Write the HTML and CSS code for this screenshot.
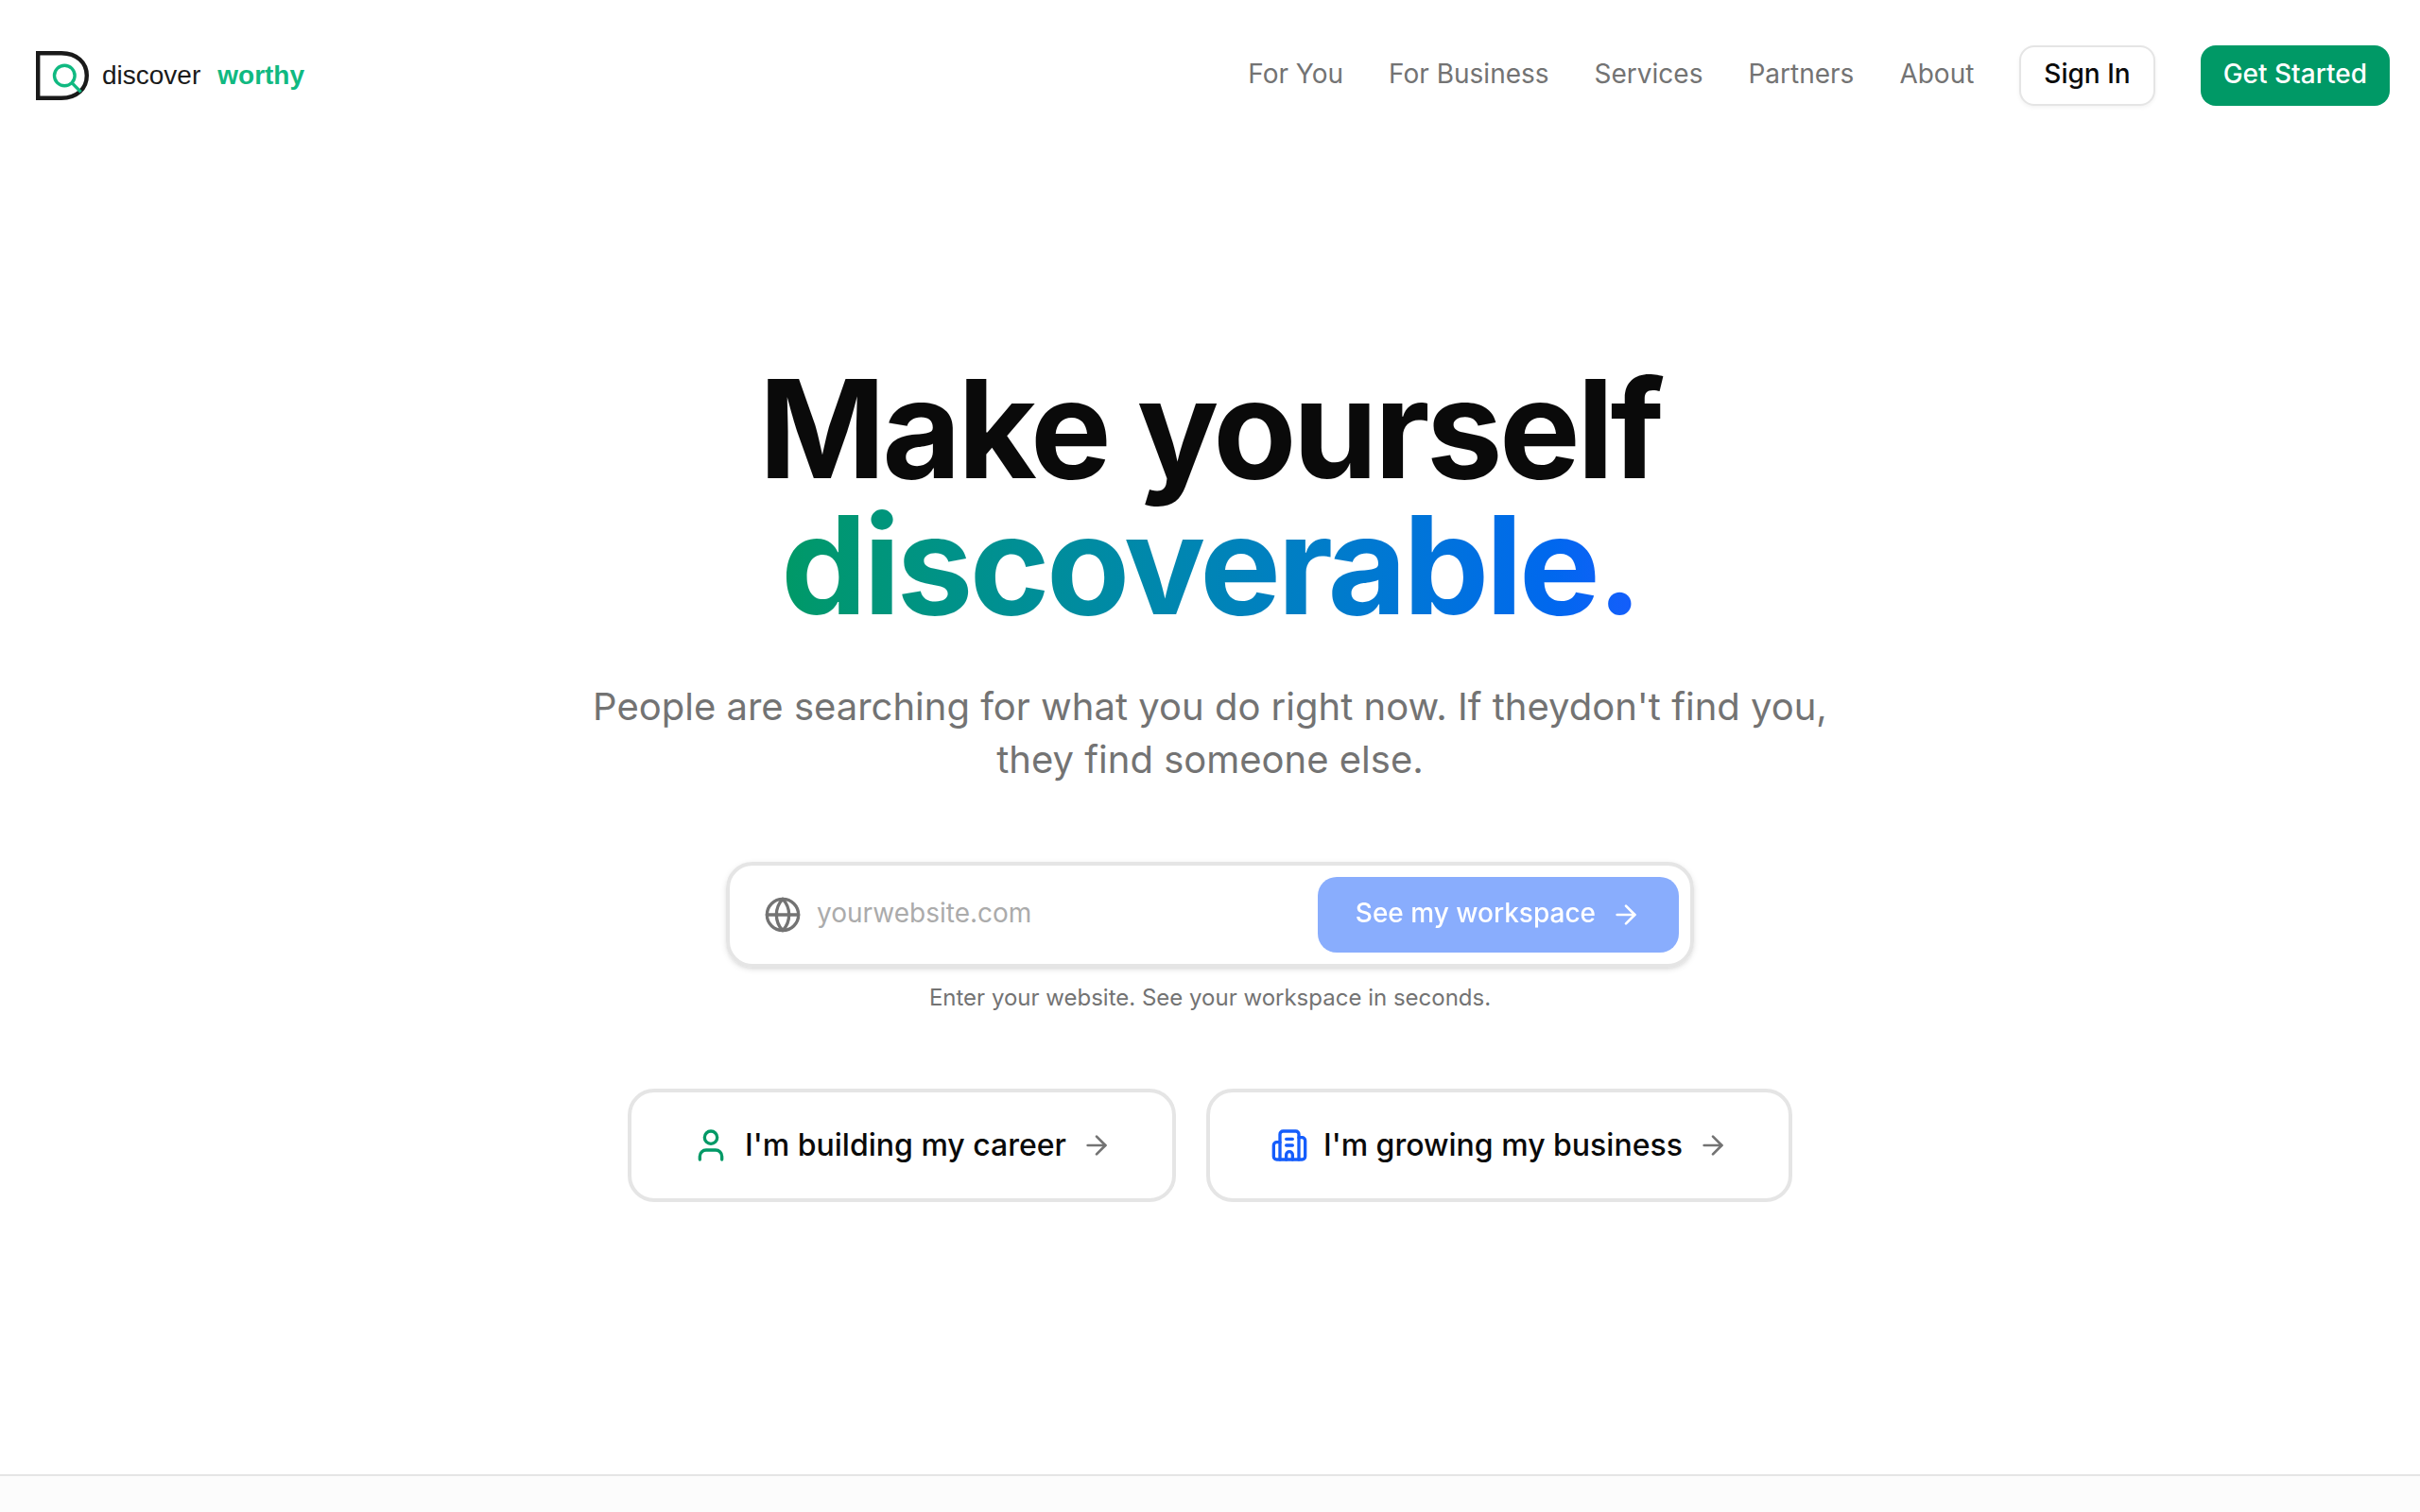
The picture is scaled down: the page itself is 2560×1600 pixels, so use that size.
FILE: index.html
```html
<!DOCTYPE html>
<html lang="en">
<head>
    <meta charset="UTF-8">
    <meta name="viewport" content="width=device-width, initial-scale=1.0">
    <title>discover worthy</title>
    <link rel="stylesheet" href="styles.css">
</head>
<body>
    <header class="header">
        <a href="#" class="logo">
            <svg class="logo-mark" viewBox="0 0 64 64" fill="none" aria-hidden="true">
                <path d="M8.2 8.2H33C49 8.2 59.8 18 59.8 32S49 55.8 33 55.8H8.2Z" stroke="#1a1a1a" stroke-width="4.4"/>
                <circle cx="36.3" cy="32" r="10.8" stroke="#10b981" stroke-width="3.4"/>
                <path d="M44 39.6L53.6 49.4" stroke="#10b981" stroke-width="3.4"/>
            </svg>
            <span class="logo-discover">discover</span>
            <span class="logo-worthy">worthy</span>
        </a>
        <nav class="nav">
            <a href="#" class="nav-link">For You</a>
            <a href="#" class="nav-link">For Business</a>
            <a href="#" class="nav-link">Services</a>
            <a href="#" class="nav-link">Partners</a>
            <a href="#" class="nav-link">About</a>
            <button type="button" class="btn btn-outline">Sign In</button>
            <button type="button" class="btn btn-green">Get Started</button>
        </nav>
    </header>

    <main class="hero">
        <h1>Make yourself<br><span class="gradient">discoverable.</span></h1>
        <p class="subtitle">People are searching for what you do right now. If theydon't find you, they find someone else.</p>

        <!-- Website form -->
        <form class="site-form">
            <svg class="icon-lg" viewBox="0 0 24 24" aria-hidden="true">
                <circle cx="12" cy="12" r="10"/>
                <path d="M12 2a14.5 14.5 0 0 0 0 20 14.5 14.5 0 0 0 0-20"/>
                <path d="M2 12h20"/>
            </svg>
            <input type="text" id="website" placeholder="yourwebsite.com" aria-label="Your website">
            <button type="submit" class="submit" disabled>
                <span>See my workspace</span>
                <svg class="icon-md" viewBox="0 0 24 24" aria-hidden="true">
                    <path d="M5 12h14"/>
                    <path d="m12 5 7 7-7 7"/>
                </svg>
            </button>
        </form>
        <p class="hint">Enter your website. See your workspace in seconds.</p>

        <!-- Paths -->
        <div class="choices">
            <a href="#" class="choice">
                <svg class="icon-lg green" viewBox="0 0 24 24" aria-hidden="true">
                    <path d="M19 21v-2a4 4 0 0 0-4-4H9a4 4 0 0 0-4 4v2"/>
                    <circle cx="12" cy="7" r="4"/>
                </svg>
                <span>I'm building my career</span>
                <svg class="icon-md" viewBox="0 0 24 24" aria-hidden="true">
                    <path d="M5 12h14"/>
                    <path d="m12 5 7 7-7 7"/>
                </svg>
            </a>
            <a href="#" class="choice">
                <svg class="icon-lg blue" viewBox="0 0 24 24" aria-hidden="true">
                    <path d="M10 12h4"/>
                    <path d="M10 8h4"/>
                    <path d="M14 21v-3a2 2 0 0 0-4 0v3"/>
                    <path d="M6 10H4a2 2 0 0 0-2 2v7a2 2 0 0 0 2 2h16a2 2 0 0 0 2-2V9a2 2 0 0 0-2-2h-2"/>
                    <path d="M6 21V5a2 2 0 0 1 2-2h8a2 2 0 0 1 2 2v16"/>
                </svg>
                <span>I'm growing my business</span>
                <svg class="icon-md" viewBox="0 0 24 24" aria-hidden="true">
                    <path d="M5 12h14"/>
                    <path d="m12 5 7 7-7 7"/>
                </svg>
            </a>
        </div>
    </main>

    <section class="next"></section>
</body>
</html>
```
FILE: styles.css
```css
* {
    box-sizing: border-box;
}
body {
    margin: 0;
    min-height: 100vh;
    display: flex;
    flex-direction: column;
    background: #fff;
    color: #0a0a0a;
    font-family: Inter, sans-serif;
    font-size: 28px;
    line-height: 40px;
}
a {
    color: inherit;
    text-decoration: none;
}
button, input {
    font: inherit;
}
svg {
    flex-shrink: 0;
    fill: none;
    stroke: currentColor;
    stroke-width: 2;
    stroke-linecap: round;
    stroke-linejoin: round;
}
.icon-lg {
    width: 40px;
    height: 40px;
    color: #737373;
}
.icon-md {
    width: 32px;
    height: 32px;
    color: #737373;
}
.green {
    color: #009966;
}
.blue {
    color: #155dfc;
}

/* Header */
.header {
    display: flex;
    align-items: center;
    justify-content: space-between;
    padding: 48px 32px;
}
.logo {
    display: flex;
    align-items: center;
    font-family: "Liberation Sans", Arial, sans-serif;
}
.logo-mark {
    width: 64px;
    height: 64px;
    stroke-linecap: butt;
    stroke-linejoin: miter;
}
.logo-discover {
    margin: 0 18px 0 12px;
    color: #1a1a1a;
}
.logo-worthy {
    color: #10b981;
    font-weight: bold;
}
.nav {
    display: flex;
    align-items: center;
    gap: 48px;
}
.nav-link {
    color: #737373;
    padding-bottom: 4px;
}
.btn {
    height: 64px;
    padding: 0 24px 4px;
    border: 0;
    border-radius: 16px;
    font-weight: 500;
    cursor: pointer;
}
.btn-outline {
    background: #fff;
    color: #0a0a0a;
    border: 2px solid #e5e5e5;
    box-shadow: 0 2px 4px rgba(0, 0, 0, 0.05);
}
.btn-green {
    background: #009966;
    color: #fff;
}

/* Hero */
.hero {
    display: flex;
    flex-direction: column;
    align-items: center;
    padding: 222px 48px 288px;
    text-align: center;
}
h1 {
    margin: 0;
    font-size: 144px;
    line-height: 144px;
    font-weight: 700;
    letter-spacing: -0.025em;
}
.gradient {
    background: linear-gradient(to right in oklab, #009966, #155dfc);
    -webkit-background-clip: text;
    background-clip: text;
    color: transparent;
}
.subtitle {
    max-width: 1344px;
    margin: 50px 0 0;
    color: #737373;
    font-size: 40px;
    line-height: 56px;
}
.site-form {
    display: flex;
    align-items: center;
    gap: 16px;
    width: 100%;
    max-width: 1024px;
    margin-top: 80px;
    padding: 12px 12px 12px 36px;
    border: 4px solid #e5e5e5;
    border-radius: 28px;
    box-shadow: 0 2px 6px rgba(0, 0, 0, 0.1), 0 2px 4px -2px rgba(0, 0, 0, 0.1);
}
.site-form input {
    flex: 1;
    min-width: 0;
    height: 80px;
    padding: 0 0 4px;
    border: 0;
    outline: none;
    background: transparent;
    color: #0a0a0a;
}
.site-form input::placeholder {
    color: #ababab;
}
.submit {
    display: flex;
    align-items: center;
    gap: 16px;
    height: 80px;
    padding: 0 40px;
    border: 0;
    border-radius: 20px;
    background: #155dfc;
    color: #fff;
    font-weight: 500;
    opacity: 0.5;
}
.submit span {
    padding-bottom: 4px;
}
.submit .icon-md {
    color: #fff;
}
.hint {
    margin: 16px 0 0;
    color: #737373;
    font-size: 24px;
    line-height: 32px;
}
.choices {
    display: flex;
    flex-wrap: wrap;
    justify-content: center;
    gap: 32px;
    margin-top: 80px;
}
.choice {
    display: flex;
    align-items: center;
    gap: 16px;
    height: 120px;
    padding: 0 64px;
    border: 4px solid #e5e5e5;
    border-radius: 28px;
    font-size: 32px;
    font-weight: 500;
}

.next {
    flex: 1;
    border-top: 2px solid #e5e5e5;
    background: #fcfcfc;
}
```
